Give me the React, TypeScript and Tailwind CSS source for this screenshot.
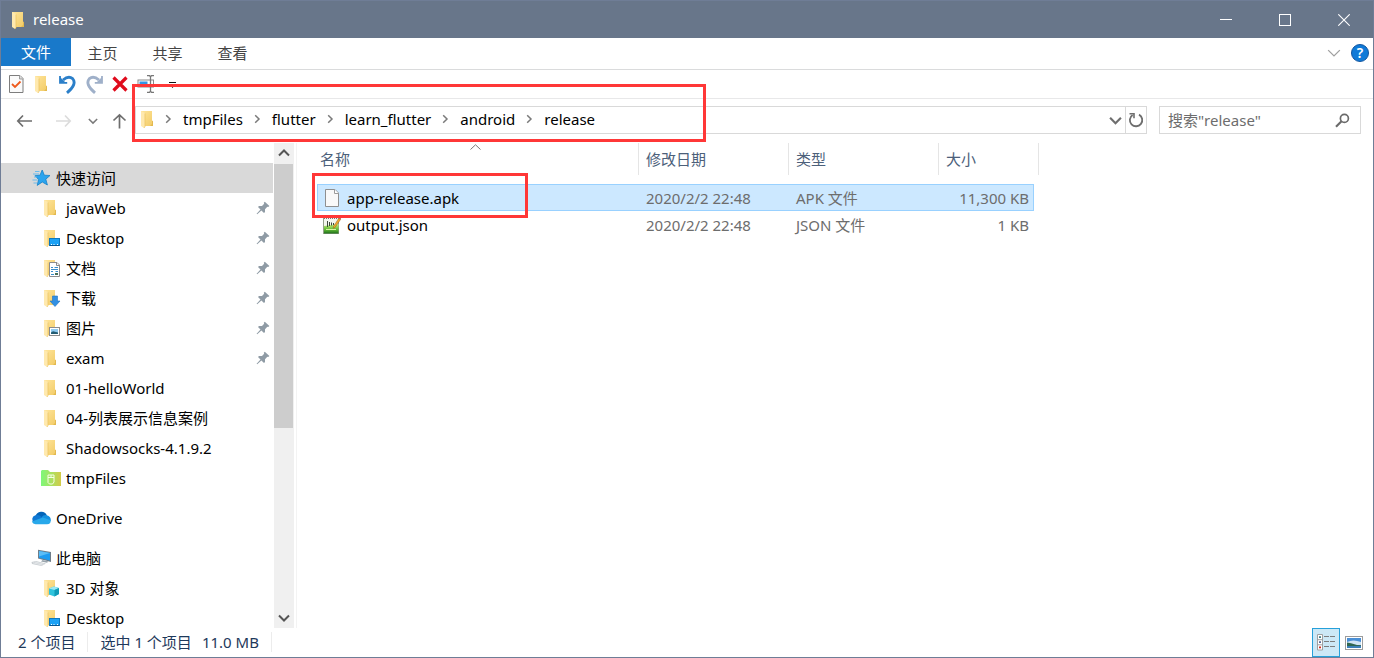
import React, { Fragment, useState } from "react";

/* ============================================================
   Data
=============================================================== */
type IconName =
  | "folder"
  | "desktop"
  | "docs"
  | "download"
  | "pictures"
  | "tmp"
  | "star"
  | "cloud"
  | "pc"
  | "cube";

interface NavItem {
  id: string;
  label: string;
  icon: IconName;
  root?: boolean;
  pinned?: boolean;
  gap?: boolean;
}

const navItems: NavItem[] = [
  { id: "quick", label: "快速访问", icon: "star", root: true },
  { id: "javaWeb", label: "javaWeb", icon: "folder", pinned: true },
  { id: "desktop", label: "Desktop", icon: "desktop", pinned: true },
  { id: "docs", label: "文档", icon: "docs", pinned: true },
  { id: "downloads", label: "下载", icon: "download", pinned: true },
  { id: "pictures", label: "图片", icon: "pictures", pinned: true },
  { id: "exam", label: "exam", icon: "folder", pinned: true },
  { id: "hello", label: "01-helloWorld", icon: "folder" },
  { id: "list", label: "04-列表展示信息案例", icon: "folder" },
  { id: "ss", label: "Shadowsocks-4.1.9.2", icon: "folder" },
  { id: "tmp", label: "tmpFiles", icon: "tmp" },
  { id: "onedrive", label: "OneDrive", icon: "cloud", root: true, gap: true },
  { id: "pc", label: "此电脑", icon: "pc", root: true, gap: true },
  { id: "objects", label: "3D 对象", icon: "cube" },
  { id: "pc-desktop", label: "Desktop", icon: "desktop" },
];

const crumbs = ["tmpFiles", "flutter", "learn_flutter", "android", "release"];

const files = [
  { name: "app-release.apk", date: "2020/2/2 22:48", type: "APK 文件", size: "11,300 KB", icon: "blank" },
  { name: "output.json", date: "2020/2/2 22:48", type: "JSON 文件", size: "1 KB", icon: "npp" },
];

/* ============================================================
   Icons
=============================================================== */
const FolderShape = () => (
  <>
    <path d="M3 1H14V10.5L15 11.5V16H7L3 14Z" fill="url(#folderBody)" />
    <path d="M14 10.5L15 11.5V16H12L14 14Z" fill="#e3b94f" />
    <path d="M3 1L7 3V16.5L6 18L3 16Z" fill="#ffe9ae" />
    <path d="M7 3.5V16.5L6 18" fill="none" stroke="#e9c15c" strokeWidth="0.7" />
  </>
);

const NavIcon = ({ name }: { name: IconName }) => {
  if (name === "star") {
    return (
      <svg width="20" height="18" viewBox="0 0 20 18" className="shrink-0">
        <path d="M11.2 1L13.3 6.2L19 6.5L14.8 10.2L16.4 16L11.3 13L6.2 16.4L7.6 10.5L4 6.7L9 6.2Z" fill="#2ba4ee" stroke="#1480c8" strokeWidth="0.8" />
        <path d="M4 2.5H8.5M2 5H8M3 8H6M1.5 11H6.5M2.5 14H6" stroke="#5db8ee" strokeWidth="0.9" />
      </svg>
    );
  }
  if (name === "cloud") {
    return (
      <svg width="20" height="18" viewBox="0 0 20 18" className="shrink-0">
        <path d="M4.5 7.5A6 6 0 0 1 15.9 6.4L11 11Z" fill="#0364b8" />
        <path d="M3.5 14A4.2 4.2 0 0 1 4.4 6.2Q7 5.4 9 6.8L14 10.5Z" fill="#0f78d4" />
        <path d="M10.5 8.2Q12.5 5.6 15.8 6.2A4.6 4.6 0 0 1 19.6 12L14 12Z" fill="#1490df" />
        <path d="M0.8 12.5L11.8 8.4L19.7 11.2Q20 15 16 15.2H4.5Q1.8 15 0.8 12.5Z" fill="#28a8ea" />
      </svg>
    );
  }
  if (name === "pc") {
    return (
      <svg width="20" height="18" viewBox="0 0 20 18" className="shrink-0">
        <path d="M7 0.8L20 3V13L7 9.6Z" fill="#6f7d89" />
        <path d="M8 2L19 3.9V11.6L8 8.8Z" fill="#1e9bf0" />
        <path d="M8 2L19 3.9L8 7.4Z" fill="#5bbdf7" />
        <path d="M11.5 11L17.5 12.5L16 13.8L10 12.4Z" fill="#9aa5ad" />
        <path d="M0.5 13L5 12L15 14.4L10.5 17L1 15Z" fill="#c9ced2" />
        <path d="M2 13.8L11 16M4 13L13 15.2" stroke="#eef0f2" strokeWidth="0.7" />
      </svg>
    );
  }
  if (name === "tmp") {
    return (
      <svg width="20" height="18" viewBox="0 0 20 18" className="shrink-0">
        <path d="M0 2L1 1H7L9 3H20V17H0Z" fill="url(#tmpBody)" />
        <path d="M7 6H13V13L11.5 15H8.5L7 13.5ZM7 8.5H13M10 6V8.5" fill="none" stroke="#f5ffe5" strokeWidth="1" />
      </svg>
    );
  }
  return (
    <svg width="20" height="18" viewBox="0 0 20 18" className="shrink-0">
      <FolderShape />
      {name === "desktop" && (
        <>
          <rect x="8.5" y="9.5" width="10" height="7" fill="#1ba1f5" stroke="#0d78bf" />
          <path d="M9 16.5H18" stroke="#07538c" />
          <path d="M10 15.5H11M12.5 15.5H13.5M16 15.5H17" stroke="#fff" />
        </>
      )}
      {name === "docs" && (
        <>
          <path d="M8.5 3.5H16L18.5 6V17.5H8.5Z" fill="#fff" stroke="#8c8c8c" />
          <path d="M15.5 3.5V6.5H18.5" fill="none" stroke="#8c8c8c" />
          <path d="M10 8.5H12M13.5 8.5H17M10 10.5H17M10 12.5H12M10 15.5H13M14.5 12.5H17" stroke="#3a8ecb" />
          <path d="M14 14H17V16H14Z" fill="#47705a" />
        </>
      )}
      {name === "download" && (
        <path d="M11.5 7H16.5V12H19L14 17.5L9 12H11.5Z" fill="#3290e3" stroke="#1f74c4" strokeWidth="0.6" />
      )}
      {name === "pictures" && (
        <>
          <rect x="8.5" y="8.5" width="10" height="8" fill="#fff" stroke="#8c8c8c" />
          <rect x="10" y="10" width="7" height="5" fill="#8fcaf0" />
          <path d="M10 13.5L12 12.2L17 13.6V15H10Z" fill="#245c72" />
        </>
      )}
      {name === "cube" && (
        <>
          <path d="M8 9.5L13 7.5L18 9V15L13.5 17.5L8 15.6Z" fill="#2fc3dc" />
          <path d="M8 9.5L13 7.5L18 9L13.5 11Z" fill="#9be8f3" />
          <path d="M13.5 11L18 9V15L13.5 17.5Z" fill="#0f9bb8" />
        </>
      )}
    </svg>
  );
};

const PinIcon = () => (
  <svg width="14" height="14" viewBox="0 0 14 14" className="shrink-0">
    <path d="M8.8 0.8L13.4 5L12.2 6L11.3 5.8L9 8.2L9 11L8 12L5.4 9.4L1.2 13.2L0.6 12.8L4.5 8.4L2 6L3 5L6 4.9L8.2 2.7L7.8 1.8Z" fill="#8f9ba5" />
  </svg>
);

const ChevronRight = () => (
  <svg width="7" height="10" viewBox="0 0 7 10">
    <path d="M1.2 1.2L5 5L1.2 8.8" fill="none" stroke="#7a7a7a" strokeWidth="1.5" />
  </svg>
);

const ChevronDown = ({ size, color, stroke }: { size: number; color: string; stroke: number }) => (
  <svg width={size} height={size} viewBox="0 0 12 12">
    <path d="M1 3.5L6 8.5L11 3.5" fill="none" stroke={color} strokeWidth={stroke} />
  </svg>
);

const BlankFileIcon = () => (
  <svg width="18" height="20" viewBox="0 0 18 20" className="shrink-0">
    <path d="M2.5 1.5H12L15.5 5V18.5H2.5Z" fill="#f9f9f9" stroke="#8f8f8f" />
    <path d="M11.5 1.5V5.5H15.5" fill="#fff" stroke="#9c9c9c" />
  </svg>
);

const NppFileIcon = () => (
  <svg width="18" height="20" viewBox="0 0 18 20" className="shrink-0">
    <rect x="0.5" y="2.5" width="15" height="16" fill="#f4f6ee" stroke="#96a08a" />
    <path d="M1 11L15.5 9V18.5H1Z" fill="url(#nppBody)" />
    <path d="M1 3.5H15" stroke="#777" strokeDasharray="1 1" />
    <path d="M4.5 6V12M6.5 7V11M8.5 7.5V10.5M10.5 8V10" stroke="#3e4a3b" />
    <path d="M3 14.5H13" stroke="#d8f7a0" />
    <path d="M10.5 11.5L15.8 3.2L17.6 4.4L12.2 12.2L10.2 13.4Z" fill="#f3a52c" stroke="#8d6420" strokeWidth="0.5" />
    <path d="M15.8 3.2L16.8 1.8L18 2.8L17.6 4.4Z" fill="#b34f4f" />
  </svg>
);

const Defs = () => (
  <svg width="0" height="0" className="absolute" aria-hidden="true">
    <defs>
      <linearGradient id="folderBody" x1="0" y1="0" x2="1" y2="1">
        <stop offset="0" stopColor="#ffe59b" />
        <stop offset="1" stopColor="#f2cb66" />
      </linearGradient>
      <linearGradient id="tmpBody" x1="0" y1="0" x2="1" y2="0">
        <stop offset="0" stopColor="#7df87a" />
        <stop offset="1" stopColor="#d3cb49" />
      </linearGradient>
      <linearGradient id="nppBody" x1="0" y1="0" x2="0" y2="1">
        <stop offset="0" stopColor="#c6f07a" />
        <stop offset="0.6" stopColor="#5fb834" />
        <stop offset="1" stopColor="#1e6e1c" />
      </linearGradient>
    </defs>
  </svg>
);

/* ============================================================
   Title bar
=============================================================== */
const winButton = "flex h-full w-[59px] items-center justify-center hover:bg-white/15";

const TitleBar = () => (
  <header className="flex h-[37px] shrink-0 items-center bg-[#68768a] text-white">
    <div className="flex flex-1 items-center gap-1 pl-2">
      <svg width="20" height="18" viewBox="0 0 20 18">
        <FolderShape />
      </svg>
      <h1 className="pb-0.5">release</h1>
    </div>
    <button className={winButton} aria-label="最小化">
      <svg width="12" height="12" viewBox="0 0 12 12">
        <path d="M0 5.5H12" stroke="#fff" />
      </svg>
    </button>
    <button className={winButton} aria-label="最大化">
      <svg width="12" height="12" viewBox="0 0 12 12">
        <rect x="0.5" y="0.5" width="11" height="11" fill="none" stroke="#fff" />
      </svg>
    </button>
    <button className={winButton} aria-label="关闭">
      <svg width="12" height="12" viewBox="0 0 12 12">
        <path d="M0.3 0.3L11.7 11.7M11.7 0.3L0.3 11.7" stroke="#fff" strokeWidth="1.1" />
      </svg>
    </button>
  </header>
);

/* ============================================================
   Ribbon tabs + quick access toolbar
=============================================================== */
const Ribbon = () => (
  <nav className="flex h-8 shrink-0 items-start border-b border-[#dadbdc] text-[#444]">
    <button className="h-7 w-[70px] bg-[#1979ca] text-white">文件</button>
    {["主页", "共享", "查看"].map((tab) => (
      <button key={tab} className="h-[30px] w-[65px] pr-0.5 hover:bg-gray-100">
        {tab}
      </button>
    ))}
    <div className="ml-auto flex h-[30px] items-center gap-1.5 pr-1">
      <button aria-label="展开功能区" className="p-1">
        <ChevronDown size={14} color="#a0a0a0" stroke={1.1} />
      </button>
      <button aria-label="帮助" className="flex size-[18px] items-center justify-center rounded-full border border-[#1256a0] bg-[#0f7ad8] text-sm font-semibold text-white">
        ?
      </button>
    </div>
  </nav>
);

const toolButton = "flex h-full w-[26px] items-center justify-center hover:bg-sky-100";

const QuickToolbar = () => (
  <div className="flex h-[29px] shrink-0 items-center border-b border-[#e8e8e9] pl-0.5">
    <button className={toolButton} aria-label="属性">
      <svg width="18" height="18" viewBox="0 0 18 18">
        <path d="M2.5 0.5H13L16 3.5V17.5H2.5Z" fill="#fafafa" stroke="#7d7d7d" />
        <path d="M12.5 0.5V4H16" fill="#ddd" stroke="#9b9b9b" />
        <path d="M5 9L8 12L13.5 6.5" fill="none" stroke="#ee5a1c" strokeWidth="1.8" />
      </svg>
    </button>
    <button className={toolButton} aria-label="新建文件夹">
      <svg width="20" height="18" viewBox="0 0 20 18">
        <FolderShape />
      </svg>
    </button>
    <button className={toolButton} aria-label="撤消">
      <svg width="18" height="19" viewBox="0 0 18 19">
        <path d="M4 5Q9.5 0.2 13.6 3.6Q18.4 9 8 17.8" fill="none" stroke="#2b7fc9" strokeWidth="2.9" />
        <path d="M1 1V7.8H8.2" fill="none" stroke="#2b7fc9" strokeWidth="1.8" />
        <path d="M1 2V8H7Z" fill="#2b7fc9" />
      </svg>
    </button>
    <button className={toolButton} aria-label="恢复">
      <svg width="18" height="19" viewBox="0 0 18 19">
        <path d="M14 5Q8.5 0.2 4.4 3.6Q-0.4 9 10 17.8" fill="none" stroke="#9fb0c9" strokeWidth="2.9" />
        <path d="M17 1V7.8H9.8" fill="none" stroke="#9fb0c9" strokeWidth="1.8" />
        <path d="M17 2V8H11Z" fill="#9fb0c9" />
      </svg>
    </button>
    <button className={toolButton} aria-label="删除">
      <svg width="16" height="16" viewBox="0 0 16 16">
        <path d="M1.5 1.5L14.5 14.5M14.5 1.5L1.5 14.5" stroke="#e00b1c" strokeWidth="3.2" />
      </svg>
    </button>
    <button className={toolButton} aria-label="重命名">
      <svg width="18" height="18" viewBox="0 0 18 18">
        <rect x="1" y="5" width="15.5" height="7" fill="#fff" stroke="#8a8a8a" />
        <rect x="2.5" y="6.5" width="8" height="4" fill="#3496e6" />
        <path d="M10 0.7H12.5L13.5 1.7L14.5 0.7H17M10 17.3H12.5L13.5 16.3L14.5 17.3H17M13.5 1.5V16.5" fill="none" stroke="#777" strokeWidth="1.3" />
      </svg>
    </button>
    <button className={toolButton} aria-label="自定义快速访问工具栏">
      <svg width="7" height="8" viewBox="0 0 7 8">
        <path d="M0 2.5H7" stroke="#111" />
        <path d="M1 5H6L3.5 8Z" fill="#111" />
      </svg>
    </button>
  </div>
);

/* ============================================================
   Address bar
=============================================================== */
const AddressBar = () => {
  const [query, setQuery] = useState("");

  return (
    <div className="relative flex h-11 shrink-0 items-start gap-3 pt-[7px] pr-3">
      <div className="flex h-7 flex-1">
        <div className="flex w-[134px] items-center justify-between pl-[15px] pr-2 pt-0.5">
          <button aria-label="返回">
            <svg width="17" height="14" viewBox="0 0 17 14">
              <path d="M7 1.5L1.8 7L7 12.5M2 7H16" fill="none" stroke="#6e6e6e" strokeWidth="1.7" />
            </svg>
          </button>
          <button aria-label="前进" className="ml-2">
            <svg width="17" height="14" viewBox="0 0 17 14">
              <path d="M10 1.5L15.2 7L10 12.5M15 7H1" fill="none" stroke="#dcdcdc" strokeWidth="1.7" />
            </svg>
          </button>
          <button aria-label="最近浏览的位置" className="ml-0.5">
            <ChevronDown size={10} color="#7a7a7a" stroke={1.8} />
          </button>
          <button aria-label="上移到父文件夹">
            <svg width="15" height="16" viewBox="0 0 15 16">
              <path d="M1.5 7.5L7.5 1.8L13.5 7.5M7.5 2V15.5" fill="none" stroke="#6e6e6e" strokeWidth="1.7" />
            </svg>
          </button>
        </div>
        <div className="flex flex-1 border border-[#d9d9d9]">
          <div className="flex flex-1 items-center pb-0.5 pl-0.5">
            <svg width="20" height="18" viewBox="0 0 20 18" className="-mr-1">
              <FolderShape />
            </svg>
            {crumbs.map((crumb) => (
              <Fragment key={crumb}>
                <span className="flex w-[29px] justify-center">
                  <ChevronRight />
                </span>
                <button className="hover:bg-sky-100">{crumb}</button>
              </Fragment>
            ))}
          </div>
          <button aria-label="以前的位置" className="flex w-5 items-center justify-center">
            <ChevronDown size={13} color="#6e6e6e" stroke={2} />
          </button>
          <button aria-label="刷新" className="flex w-[21px] items-center justify-center border-l border-[#d9d9d9]">
            <svg width="16" height="16" viewBox="0 0 16 16">
              <path d="M11 2.6A6.2 6.2 0 1 1 4.6 2.9" fill="none" stroke="#6e6e6e" strokeWidth="1.8" />
              <path d="M1.5 1.8H6V6.3" fill="none" stroke="#6e6e6e" strokeWidth="1.6" />
            </svg>
          </button>
        </div>
      </div>
      <label className="flex h-7 w-[202px] items-center border border-[#d9d9d9] pl-2 pr-2.5">
        <input
          type="text"
          aria-label="搜索"
          placeholder={'搜索"release"'}
          className="min-w-0 flex-1 outline-none placeholder:text-[#6d6d6d]"
          value={query}
          onChange={(e) => setQuery(e.target.value)}
        />
        <svg width="15" height="15" viewBox="0 0 15 15">
          <circle cx="9.4" cy="5.4" r="4" fill="none" stroke="#6a6a6a" strokeWidth="1.7" />
          <path d="M6.5 8.3L1 13.8" stroke="#6a6a6a" strokeWidth="2.2" />
        </svg>
      </label>

      {/* highlight around the path */}
      <div className="pointer-events-none absolute left-[131px] -top-[15px] z-10 h-[58px] w-[574px] border-3 border-[#ff3737]" />
    </div>
  );
};

/* ============================================================
   Navigation pane
=============================================================== */
const Sidebar = () => {
  const [active, setActive] = useState("quick");

  return (
    <aside className="flex w-[296px] shrink-0 border-r border-[#f3f3f3]">
      <ul className="min-w-0 flex-1 overflow-hidden pt-5">
        {navItems.map((item) => (
          <li key={item.id} className={item.gap ? "mt-2.5" : ""}>
            <button
              onClick={() => setActive(item.id)}
              className={`flex h-[30px] w-full items-center gap-[5px] pr-[3px] text-left ${
                item.root ? "pl-[30px]" : "pl-10"
              } ${active === item.id ? "bg-[#d9d9d9]" : "hover:bg-sky-50"}`}
            >
              <NavIcon name={item.icon} />
              <span className="flex-1 whitespace-nowrap">{item.label}</span>
              {item.pinned && <PinIcon />}
            </button>
          </li>
        ))}
      </ul>
      <div className="ml-px mr-0.5 flex w-5 flex-col bg-[#f0f0f0]">
        <button aria-label="向上滚动" className="flex h-[21px] shrink-0 rotate-180 items-center justify-center">
          <ChevronDown size={12} color="#555" stroke={2} />
        </button>
        <div className="mr-px h-[264px] bg-[#cdcdcd]" />
        <button aria-label="向下滚动" className="mt-auto flex h-[21px] shrink-0 items-center justify-center">
          <ChevronDown size={12} color="#555" stroke={2} />
        </button>
      </div>
    </aside>
  );
};

/* ============================================================
   File list
=============================================================== */
const headCell = "border-r border-[#e5e5e5] pl-[7px] text-left font-normal";

const FileList = () => {
  const [selected, setSelected] = useState("app-release.apk");

  return (
    <main className="relative min-w-0 flex-1 overflow-hidden pl-5">
      <table className="table-fixed border-separate border-spacing-0">
        <colgroup>
          <col className="w-[322px]" />
          <col className="w-[150px]" />
          <col className="w-[150px]" />
          <col className="w-[95px]" />
          <col className="w-[5px]" />
        </colgroup>
        <thead className="text-[#4c607a]">
          <tr className="h-8">
            <th className="relative border-r border-[#e5e5e5] pl-[3px] text-left font-normal">
              名称
              <svg width="11" height="6" viewBox="0 0 11 6" className="absolute left-1/2 top-px -translate-x-2">
                <path d="M0.5 5.5L5.5 0.8L10.5 5.5" fill="none" stroke="#7a7a7a" />
              </svg>
            </th>
            <th className={headCell}>修改日期</th>
            <th className={headCell}>类型</th>
            <th className={headCell} colSpan={2}>大小</th>
          </tr>
        </thead>
        <tbody className="text-[#6d6d6d]">
          <tr className="h-[9px]" aria-hidden="true">
            <td colSpan={5} />
          </tr>
          {files.map((file) => {
            const on = selected === file.name;
            const cell = on ? "border-y border-[#99d1ff] bg-[#cce8ff]" : "border-y border-transparent";
            return (
              <tr key={file.name} className="h-[27px] cursor-default" onClick={() => setSelected(file.name)}>
                <td className={`${cell} ${on ? "border-l" : "border-l border-l-transparent"} pl-[5px] text-black`}>
                  <span className="flex items-center gap-1.5">
                    {file.icon === "blank" ? <BlankFileIcon /> : <NppFileIcon />}
                    {file.name}
                  </span>
                </td>
                <td className={`${cell} pl-[7px]`}>{file.date}</td>
                <td className={`${cell} pl-[7px]`}>{file.type}</td>
                <td className={`${cell} ${on ? "border-r" : "border-r border-r-transparent"} pr-1 text-right`}>{file.size}</td>
                <td />
              </tr>
            );
          })}
        </tbody>
      </table>

      {/* highlight around the package */}
      <div className="pointer-events-none absolute left-[15px] top-[30px] h-[45px] w-[216px] border-3 border-[#ff3737]" />
    </main>
  );
};

/* ============================================================
   Status bar
=============================================================== */
const StatusBar = () => (
  <footer className="flex h-[29px] shrink-0 items-center pl-[17px] pr-[5px] text-[#1e395b]">
    <div className="flex pb-0.5">
      <span className="border-r border-[#ececec] pr-3">2 个项目</span>
      <span className="pl-3">选中 1 个项目</span>
      <span className="border-r border-[#ececec] pl-2.5 pr-3">11.0 MB</span>
    </div>
    <div className="ml-auto flex h-full items-center">
      <button aria-label="详细信息" className="flex h-full w-7 items-center justify-center border border-[#26a0da] bg-[#cce8f6]">
        <svg width="18" height="17" viewBox="0 0 18 17">
          <path d="M0.5 0.5H5.5V16H0.5ZM0.5 5.7H5.5M0.5 10.8H5.5" fill="#fff" stroke="#a0a0a0" />
          <path d="M2 2.2H4V4H2Z" fill="#3b7d86" />
          <path d="M2 7.3H4V9.1H2Z" fill="#5a6a96" />
          <path d="M2 12.4H4V14.2H2Z" fill="#d22a1e" />
          <path d="M7 2.5H12M13 2.5H18M7 7.5H12M13 7.5H18M7 12.5H12M13 12.5H18" stroke="#7d7d7d" />
        </svg>
      </button>
      <button aria-label="大图标" className="flex h-full w-7 items-center justify-center">
        <svg width="18" height="14" viewBox="0 0 18 14">
          <rect x="0.5" y="0.5" width="17" height="13" fill="#fff" stroke="#9c9c9c" />
          <rect x="2" y="2" width="14" height="10" fill="#4a8fd6" />
          <path d="M2 6Q8 3 16 6V9H2Z" fill="#cfe4f5" />
          <path d="M2 6.5L6 7.2L12 9L16 9.2V10H2Z" fill="#2e6650" />
          <path d="M2 10H16V12H2Z" fill="#3a7fb8" />
        </svg>
      </button>
    </div>
  </footer>
);

export default function App() {
  return (
    <div className="flex h-screen flex-col overflow-hidden border border-[#6f7d96] bg-white font-['Noto_Sans','Noto_Sans_CJK_SC',sans-serif] text-[15px] leading-5 text-black">
      <Defs />
      <TitleBar />
      <Ribbon />
      <QuickToolbar />
      <AddressBar />
      <div className="flex min-h-0 flex-1">
        <Sidebar />
        <FileList />
      </div>
      <StatusBar />
    </div>
  );
}
